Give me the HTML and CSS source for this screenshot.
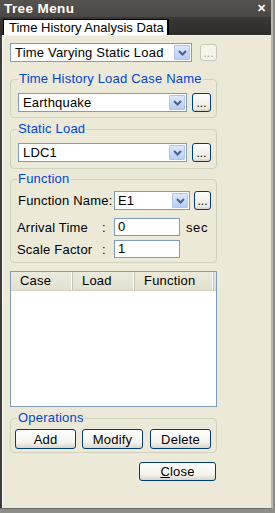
FILE: index.html
```html
<!DOCTYPE html>
<html>
<head>
<meta charset="utf-8">
<link rel="stylesheet" href="styles.css">
</head>
<body>
<div class="window">
  <div class="titlebar">
    <span class="title">Tree Menu</span>
    <span class="close-x">✕</span>
  </div>
  <div class="tabstrip">
    <div class="tab">Time History Analysis Data</div>
  </div>
  <div class="panel">
    <div class="row top-row">
      <div class="combo wide">
        <span class="combo-text">Time Varying Static Load</span>
        <span class="arrow"><svg width="9" height="6" viewBox="0 0 9 6"><path d="M1 1 L4.5 4.5 L8 1" fill="none" stroke="#4d6185" stroke-width="2"/></svg></span>
      </div>
      <button class="dots disabled">...</button>
    </div>

    <fieldset class="group g1">
      <legend>Time History Load Case Name</legend>
      <div class="row">
        <div class="combo mid">
          <span class="combo-text">Earthquake</span>
          <span class="arrow"><svg width="9" height="6" viewBox="0 0 9 6"><path d="M1 1 L4.5 4.5 L8 1" fill="none" stroke="#4d6185" stroke-width="2"/></svg></span>
        </div>
        <button class="dots">...</button>
      </div>
    </fieldset>

    <fieldset class="group g2">
      <legend>Static Load</legend>
      <div class="row">
        <div class="combo mid">
          <span class="combo-text">LDC1</span>
          <span class="arrow"><svg width="9" height="6" viewBox="0 0 9 6"><path d="M1 1 L4.5 4.5 L8 1" fill="none" stroke="#4d6185" stroke-width="2"/></svg></span>
        </div>
        <button class="dots">...</button>
      </div>
    </fieldset>

    <fieldset class="group g3">
      <legend>Function</legend>
      <div class="row fn-row">
        <span class="lbl fn-lbl">Function Name:</span>
        <div class="combo small">
          <span class="combo-text">E1</span>
          <span class="arrow"><svg width="9" height="6" viewBox="0 0 9 6"><path d="M1 1 L4.5 4.5 L8 1" fill="none" stroke="#4d6185" stroke-width="2"/></svg></span>
        </div>
        <button class="dots">...</button>
      </div>
      <div class="row field-row r-arr">
        <span class="lbl">Arrival Time</span><span class="colon">:</span>
        <div class="input">0</div>
        <span class="unit">sec</span>
      </div>
      <div class="row field-row r-scale">
        <span class="lbl">Scale Factor</span><span class="colon">:</span>
        <div class="input">1</div>
      </div>
    </fieldset>

    <div class="list">
      <div class="list-head">
        <div class="col c1">Case</div>
        <div class="col c2">Load</div>
        <div class="col c3">Function</div>
      </div>
    </div>

    <fieldset class="group g4">
      <legend>Operations</legend>
      <div class="row ops">
        <button class="btn">Add</button>
        <button class="btn">Modify</button>
        <button class="btn">Delete</button>
      </div>
    </fieldset>

    <div class="close-row">
      <button class="btn close-btn"><u>C</u>lose</button>
    </div>
  </div>
</div>
</body>
</html>
```
FILE: styles.css
```css
* { box-sizing: border-box; }
html, body { margin: 0; padding: 0; }
body {
  width: 275px;
  height: 513px;
  background: #8f8d88;
  font-family: "Liberation Sans", Arial, sans-serif;
  font-size: 13px;
  letter-spacing: 0.2px;
  color: #000;
  overflow: hidden;
}
.window {
  width: 273px;
  height: 509px;
  background: #3f3c3a;
  border-right: 2px solid #b9b7b0;
  border-bottom: 1px solid #6e6c68;
}
.titlebar {
  height: 17px;
  background: linear-gradient(#55524f, #4a4745);
  display: flex;
  align-items: center;
  justify-content: space-between;
  padding: 0 5px 0 4px;
}
.title {
  color: #fff;
  font-weight: bold;
  font-size: 13.5px;
  letter-spacing: 0.4px;
}
.close-x {
  color: #fff;
  font-weight: bold;
  font-size: 11px;
}
.tabstrip {
  height: 18px;
  background: linear-gradient(#3a3836, #2e2c2a);
  padding: 2px 0 0 3px;
  display: flex;
}
.tab {
  background: #fff;
  border: 1px solid #000;
  border-bottom: none;
  border-right: 2px solid #000;
  padding: 0 4px 0 5px;
  font-size: 13px;
  letter-spacing: 0;
  height: 16px;
  line-height: 15px;
  width: 166px;
  white-space: nowrap;
}
.panel {
  background: #ece9d8;
  height: 473px;
  margin-left: 2px;
  border-left: 1px solid #fff;
  border-top: 1px solid #f6f4ec;
  padding: 7px 0 0 7px;
}
.row { display: flex; align-items: center; }
.combo {
  height: 19px;
  background: #fff;
  border: 1px solid #7f9db9;
  display: flex;
  align-items: center;
  justify-content: space-between;
  padding: 1px 1px 1px 4px;
  flex-shrink: 0;
}
.combo-text { white-space: nowrap; line-height: 16px; }
.arrow {
  width: 16px;
  height: 15px;
  background: linear-gradient(#dde8fd, #b7cdf8);
  border: 1px solid #b0c4ef;
  border-radius: 1px;
  display: flex;
  align-items: center;
  justify-content: center;
  flex-shrink: 0;
}
.wide { width: 182px; }
.mid { width: 169px; }
.small { width: 76px; padding-left: 3px; }
.dots {
  height: 19px;
  width: 19px;
  margin-left: 5px;
  padding: 0;
  font-family: "Liberation Sans", Arial, sans-serif;
  font-size: 12px;
  line-height: 10px;
  background: linear-gradient(#ffffff, #ece9e0 85%, #d6d0c5);
  border: 1px solid #003c74;
  border-radius: 3px;
  color: #000;
  flex-shrink: 0;
}
.dots.disabled {
  border-color: #c9c7ba;
  color: #aca899;
  background: #f5f4ea;
  margin-left: 8px;
  width: 17px;
  height: 17px;
}
.top-row { height: 19px; }
.group {
  margin: 0;
  width: 207px;
  border: 1px solid #d0d0bf;
  border-radius: 4px;
  padding: 0 0 0 7px;
}
.group legend {
  color: #0046d5;
  padding: 0 1px;
  margin-left: 0;
  height: 16px;
  line-height: 16px;
  font-size: 13px;
}
.g1 { margin-top: 9px; height: 47px; }
.g1 .row, .g2 .row { margin-top: 6px; }
.g2 { margin-top: 3px; height: 48px; }
.g2 legend { margin-left: -1px; }
.g3 { margin-top: 2px; height: 92px; padding-left: 6px; }
.fn-row { margin-top: 4px; }
.fn-lbl { width: 96px; margin-left: 1px; flex-shrink: 0; }
.fn-row .dots { margin-left: 4px; width: 17px; }
.field-row { height: 18px; }
.r-arr { margin-top: 8px; }
.r-scale { margin-top: 4px; }
.lbl { white-space: nowrap; }
.field-row .lbl { width: 85px; }
.colon { width: 12px; }
.input {
  width: 66px;
  height: 18px;
  border: 1px solid #7f9db9;
  background: #fff;
  padding: 0 3px;
  line-height: 16px;
}
.unit { margin-left: 6px; letter-spacing: 0.6px; }
.list {
  margin-top: 8px;
  width: 207px;
  height: 136px;
  background: #fff;
  border: 1px solid #7f9db9;
}
.list-head {
  display: flex;
  height: 19px;
  background: linear-gradient(#ebeadb, #e3e0cf);
  border-bottom: 1px solid #d6d2c2;
}
.col {
  padding-left: 9px;
  line-height: 18px;
  border-right: 1px solid #c7c5b2;
  box-shadow: inset -1px 0 0 #fff;
}
.c1 { width: 62px; }
.c2 { width: 62px; }
.c3 { width: 79px; }
.g4 { margin-top: 3px; height: 43px; padding-left: 4px; }
.g4 legend { margin-left: 2px; }
.ops { gap: 6px; margin-top: 3px; }
.btn {
  height: 20px;
  width: 61px;
  padding: 0;
  font-family: "Liberation Sans", Arial, sans-serif;
  font-size: 13px;
  letter-spacing: 0.2px;
  line-height: 17px;
  background: linear-gradient(#ffffff, #f3f2ec 70%, #d8d4c8);
  border: 1px solid #003c74;
  border-radius: 3px;
  color: #000;
}
.ops .btn + .btn + .btn { margin-left: 1px; }
.close-row {
  width: 206px;
  display: flex;
  justify-content: flex-end;
  margin-top: 9px;
}
.close-btn { width: 77px; height: 19px; }
```
